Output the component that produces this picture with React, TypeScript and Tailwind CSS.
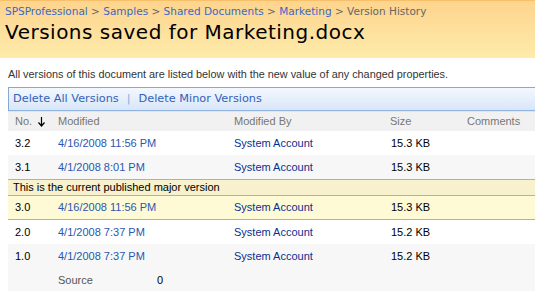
import React from "react";

const rows = [
  { no: "3.2", date: "4/16/2008 11:56 PM", size: "15.3 KB", alt: false },
  { no: "3.1", date: "4/1/2008 8:01 PM", size: "15.3 KB", alt: true },
];

const rowsAfter = [
  { no: "2.0", date: "4/1/2008 7:37 PM", size: "15.2 KB", alt: false },
  { no: "1.0", date: "4/1/2008 7:37 PM", size: "15.2 KB", alt: true },
];

const cols = "grid grid-cols-[50px_176px_156px_77px_1fr] items-center";

function Row({ no, date, size, bg, h = "h-[24px]" }: { no: string; date: string; size: string; bg: string; h?: string }) {
  return (
    <div className={`${cols} ${h} ${bg}`}>
      <span className="pl-[7px] text-black">{no}</span>
      <span className="text-[#2957b0]">{date}</span>
      <span className="text-[#0b2f8f]">System Account</span>
      <span className="pl-[1px] text-black">{size}</span>
      <span />
    </div>
  );
}

export default function App() {
  return (
    <div className="w-[535px] h-[291px] overflow-hidden bg-white font-['Liberation_Sans',Arial,sans-serif] text-[11px]">
      {/* title area */}
      <div className="h-[58px] border-t border-[#f7c06b] bg-gradient-to-b from-[#fdd48d] to-[#feebaa] px-[5px]">
        <div className="pt-[3px] h-[19px] font-['DejaVu_Sans',Verdana,sans-serif] text-[10.5px] text-[#3b67c7] whitespace-nowrap">
          SPSProfessional <span className="text-[#666]">&gt;</span> Samples <span className="text-[#666]">&gt;</span> Shared Documents{" "}
          <span className="text-[#666]">&gt;</span> Marketing <span className="text-[#666]">&gt; Version History</span>
        </div>
        <div className="font-['DejaVu_Sans',Verdana,sans-serif] text-[20px] leading-[24px] tracking-[0.5px] text-black whitespace-nowrap">
          Versions saved for Marketing.docx
        </div>
      </div>

      <div className="pl-[8px]">
        <p className="h-[29px] pt-[8px] text-[10.85px] text-[#333] whitespace-nowrap">
          All versions of this document are listed below with the new value of any changed properties.
        </p>

        {/* toolbar */}
        <div className="h-[24px] border border-r-0 border-[#85a8d6] border-b-[#8fb2de] bg-gradient-to-b from-[#f4f8fe] to-[#d8e6f9] flex items-center pl-[4px] text-[#3461b8] font-['DejaVu_Sans',Verdana,sans-serif] text-[11.3px]">
          <span>Delete All Versions</span>
          <span className="mx-[8px] text-[#8aaad6]">|</span>
          <span>Delete Minor Versions</span>
        </div>

        {/* header */}
        <div className={`${cols} h-[20px] bg-[#f1f1f1] text-[#777] border-t border-[#e4e4e4]`}>
          <span className="pl-[7px] flex items-center gap-[6px]">
            No.
            <svg width="7" height="10" viewBox="0 0 7 10" className="text-black">
              <path d="M3.5 0 V8.5 M0.5 5.5 L3.5 9 L6.5 5.5" stroke="currentColor" strokeWidth="1.2" fill="none" />
            </svg>
          </span>
          <span>Modified</span>
          <span>Modified By</span>
          <span>Size</span>
          <span>Comments</span>
        </div>

        {rows.map((r) => (
          <Row key={r.no} no={r.no} date={r.date} size={r.size} bg={r.alt ? "bg-[#f7f7f7]" : "bg-white"} />
        ))}

        {/* current major version */}
        <div className="border-t border-[#f5a43a] h-[16px] bg-[#f7f1cd] pl-[5px] flex items-center text-black">
          This is the current published major version
        </div>
        <div className="border-t border-b border-[#f5a43a]">
          <Row no="3.0" date="4/16/2008 11:56 PM" size="15.3 KB" bg="bg-[#fefad6]" h="h-[23px]" />
        </div>

        {rowsAfter.map((r) => (
          <Row key={r.no} no={r.no} date={r.date} size={r.size} bg={r.alt ? "bg-[#f7f7f7]" : "bg-white"} />
        ))}

        <div className="grid grid-cols-[50px_99px_1fr] items-center h-[24px] bg-[#f7f7f7]">
          <span />
          <span className="text-[#555]">Source</span>
          <span className="text-black">0</span>
        </div>
      </div>
    </div>
  );
}
